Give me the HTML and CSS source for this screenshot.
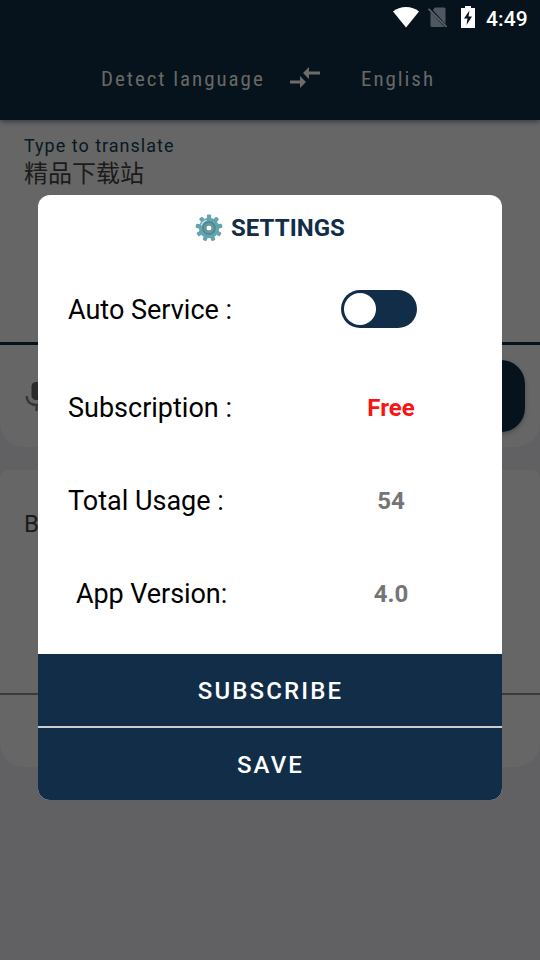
FILE: index.html
```html
<!DOCTYPE html>
<html lang="en">
<head>
<meta charset="utf-8">
<title>Settings</title>
<link rel="stylesheet" href="styles.css">
</head>
<body>
<main class="screen">
  <header class="top">
    <div class="status">
      <svg class="wifi" width="26" height="21" viewBox="0 0 26 21"><path d="M13 20.500 0 4.500C3.500 1.500 8 0 13 0s9.500 1.500 13 4.500z" fill="#fff"/></svg>
      <svg class="sim" width="20" height="21" viewBox="0 0 20 21"><path d="M7 .5h9q1.500 0 1.500 1.500v15L4.800 3zM2.500 5 16.500 20H4q-1.500 0-1.500-1.500z" fill="#4f5860"/><path d="m.5 1.800 18 18" stroke="#5b636a" stroke-width="1.700"/></svg>
      <svg class="battery" width="14" height="22" viewBox="0 0 14 22"><path d="M4 0h6v2h4v20H0V2h4z" fill="#fff"/><path d="M8.500 4.500 3 12.500h3.500L5.500 19 11 10.500H7.500z" fill="#07131c"/></svg>
      <span class="clock">4:49</span>
    </div>
    <nav class="languages">
      <span class="lang source">Detect language</span>
      <svg class="swap" width="32" height="22" viewBox="0 0 32 22"><path d="M20 0v4.500h11v3H20V12l-6-6zM1 13.500h10V9l6 6-6 6v-4.500H1z" fill="#6c6c69"/></svg>
      <span class="lang target">English</span>
    </nav>
  </header>
  <section class="card input-card">
    <div class="entry">
      <div class="label">Type to translate</div>
      <div class="typed">精品下载站</div>
    </div>
    <div class="actions">
      <svg class="mic" width="24" height="30" viewBox="0 0 24 30"><rect x="6.500" y="0" width="11" height="18" rx="4.500" fill="#2b2b2b"/><path d="M1.700 14c0 6 4.500 9 10.300 9s10.300-3 10.300-9M11.500 23v6" fill="none" stroke="#353535" stroke-width="2.300"/></svg>
      <div class="translate"></div>
    </div>
  </section>
  <section class="card output-card">
    <div class="result">Be</div>
    <div class="tools"></div>
  </section>
</main>
<section class="dialog">
  <h1 class="title">
    <svg width="28" height="28" viewBox="-14 -14 28 28">
      <g fill="#62a5b0">
        <circle r="10.200"/>
        <g id="teeth"><rect x="-2.100" y="-13.400" width="4.200" height="5" rx="1.200"/><rect x="-2.100" y="-13.400" width="4.200" height="5" rx="1.200" transform="rotate(40)"/><rect x="-2.100" y="-13.400" width="4.200" height="5" rx="1.200" transform="rotate(80)"/></g>
        <use href="#teeth" transform="rotate(120)"/><use href="#teeth" transform="rotate(240)"/>
      </g>
      <circle r="4.700" fill="#fff" stroke="#4d858d" stroke-width="4.200"/>
      <circle r="4" fill="none" stroke="#68999f" stroke-width="2.400"/>
      <path d="M-7.700-3Q-6.500-6.500-3-7.700" fill="none" stroke="#d2edf0" stroke-width="1.200" stroke-linecap="round"/>
    </svg>
    <span>SETTINGS</span>
  </h1>
  <div class="rows">
    <div class="row first"><span class="name auto">Auto Service :</span><span class="value"><span class="switch"><span class="knob"></span></span></span></div>
    <div class="row"><span class="name">Subscription :</span><span class="value free">Free</span></div>
    <div class="row"><span class="name">Total Usage :</span><span class="value">54</span></div>
    <div class="row"><span class="name version">App Version:</span><span class="value">4.0</span></div>
  </div>
  <div class="button subscribe">SUBSCRIBE</div>
  <div class="button save">SAVE</div>
</section>
</body>
</html>
```
FILE: styles.css
```css
* { box-sizing: border-box; }
body {
  margin: 0;
  width: 540px;
  height: 960px;
  overflow: hidden;
  position: relative;
  font-family: Roboto, "Noto Sans CJK SC", sans-serif;
}
.screen { height: 960px; background: #616163; }
.top {
  height: 120px;
  background: #07131c;
  position: relative;
  box-shadow: 0 2px 5px rgba(0, 0, 0, .4);
}
.status {
  height: 36px;
  display: flex;
  align-items: center;
  justify-content: flex-end;
  padding-right: 12px;
}
.wifi { margin: 0 9px 2px 0; }
.sim { margin: 0 13px 1px 0; }
.battery { margin: 0 11px 2px 0; }
.clock { width: 42px; font-size: 21px; font-weight: 500; letter-spacing: .1px; color: #fff; line-height: 36px; padding-top: 1px; white-space: nowrap; }
.languages { display: flex; align-items: center; height: 84px; padding: 0 0 1px 101px; }
.lang {
  font-family: "Roboto Condensed", Roboto, sans-serif;
  font-stretch: 75%;
  font-size: 21px;
  letter-spacing: 1.95px;
  color: #686866;
  white-space: nowrap;
  padding-top: 2px;
}
.source { width: 188px; }
.target { margin-left: 40px; }
.card { background: #666; }
.input-card { height: 327px; border-radius: 0 0 24px 24px; }
.entry { height: 225px; padding: 15px 24px 0; border-bottom: 3px solid #07131c; }
.label { font-size: 18px; line-height: 22px; letter-spacing: 1px; color: #091824; }
.typed { font-size: 24px; line-height: 34px; color: #1b1b1b; }
.actions { height: 102px; display: flex; justify-content: space-between; align-items: flex-start; padding: 15px 15px 0 24px; }
.mic { margin: 22px 0 0 1px; }
.translate { width: 180px; height: 72px; border-radius: 24px; background: #07131c; box-shadow: 0 2px 4px rgba(0, 0, 0, .25); }
.output-card { margin-top: 23px; height: 297px; border-radius: 8px 8px 24px 24px; }
.result { height: 225px; padding: 38px 24px 0; font-size: 24px; line-height: 32px; color: #1b1b1b; border-bottom: 2px solid #3b3b3b; }
.tools { height: 72px; }
.dialog {
  position: absolute;
  left: 38px;
  top: 195px;
  width: 464px;
  height: 605px;
  border-radius: 12px;
  overflow: hidden;
  background: #fff;
}
.title {
  margin: 0;
  height: 66px;
  display: flex;
  align-items: center;
  padding-left: 157px;
  gap: 8px;
  font-size: 24px;
  font-weight: 700;
  letter-spacing: .05px;
  color: #122d47;
}
.rows { height: 393px; }
.row { height: 93px; display: flex; align-items: center; padding-left: 30px; }
.row.first { height: 100px; padding-bottom: 4px; }
.name { width: 250px; font-size: 27px; color: #000; white-space: nowrap; }
.auto { padding-top: 2px; }
.version { padding-left: 8px; letter-spacing: -.08px; }
.value { width: 146px; text-align: center; font-size: 24px; font-weight: 700; color: #757575; }
.free { color: #fa1515; }
.switch { display: block; width: 76px; height: 38px; margin-left: 23px; padding: 3px; border-radius: 19px; background: #122d47; }
.knob { display: block; width: 32px; height: 32px; border-radius: 50%; background: #fff; }
.button {
  height: 72px;
  display: flex;
  align-items: center;
  justify-content: center;
  padding: 2px 0 0 1px;
  background: #122d47;
  color: #fff;
  font-size: 24px;
  font-weight: 500;
  letter-spacing: 2.14px;
}
.save { height: 74px; border-top: 2px solid #ccc; }
```
